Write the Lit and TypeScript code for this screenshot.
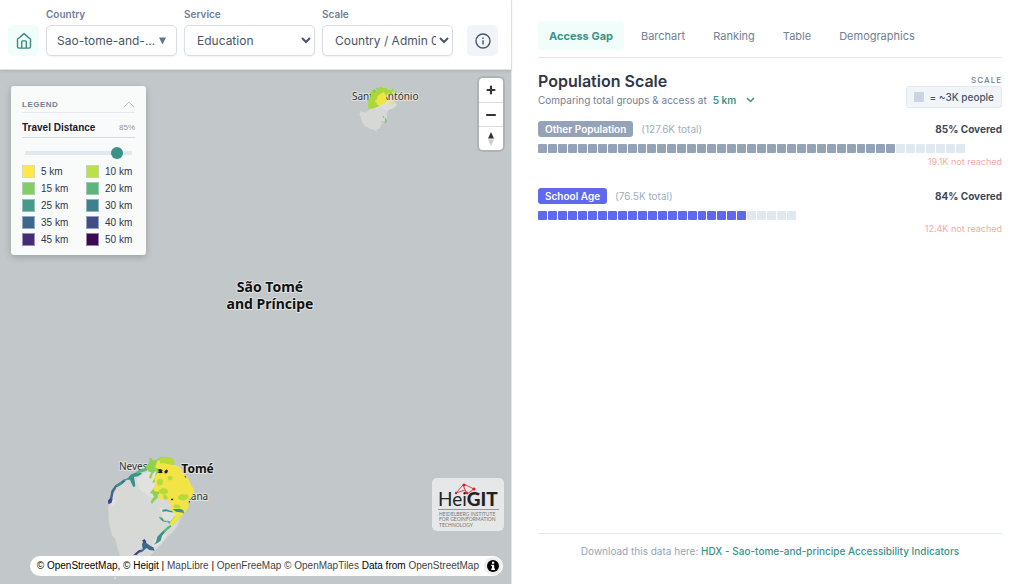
import { LitElement, html, css, svg } from "lit";
import { customElement, property, state } from "lit/decorators.js";
import { classMap } from "lit/directives/class-map.js";

interface Band {
  label: string;
  color: string;
}

interface Group {
  name: string;
  total: string;
  covered: number;
  missed: string;
  units: number;
  filled: number;
  color: string;
}

const BANDS: Band[] = [
  { label: "5 km", color: "#fde74a" },
  { label: "10 km", color: "#bddf49" },
  { label: "15 km", color: "#84cd62" },
  { label: "20 km", color: "#5bb67c" },
  { label: "25 km", color: "#479a89" },
  { label: "30 km", color: "#3c818c" },
  { label: "35 km", color: "#3d688d" },
  { label: "40 km", color: "#414c89" },
  { label: "45 km", color: "#452c77" },
  { label: "50 km", color: "#3d0852" },
];

const GROUPS: Group[] = [
  { name: "Other Population", total: "127.6K", covered: 85, missed: "19.1K", units: 43, filled: 36, color: "#94a3b8" },
  { name: "School Age", total: "76.5K", covered: 84, missed: "12.4K", units: 26, filled: 21, color: "#6069ee" },
];

/* Number of unit squares that would fill a row from edge to edge. */
const ROW_UNITS = 46.7;

const TABS = ["Access Gap", "Barchart", "Ranking", "Table", "Demographics"];

@customElement("top-bar")
export class TopBar extends LitElement {
  static styles = css`
    :host {
      display: block;
      background: #fff;
      border-bottom: 1px solid #dde2e8;
      box-shadow: 0 1px 3px rgba(0, 0, 0, 0.12);
      position: relative;
      z-index: 1;
    }
    .bar {
      display: flex;
      align-items: flex-end;
      gap: 7px;
      padding: 8px 13px 13px 8px;
    }
    .field {
      flex: 1 1 0;
      min-width: 0;
      display: flex;
      flex-direction: column;
      gap: 4px;
    }
    .label {
      font-size: 10px;
      line-height: 13px;
      font-weight: 600;
      color: #718096;
    }
    .control {
      box-sizing: border-box;
      width: 100%;
      height: 31px;
      border: 1px solid #d5dde8;
      border-radius: 5px;
      background: #fff;
      color: #4a5568;
      font: 400 12px/16px Inter, sans-serif;
      box-shadow: 0 1px 2px rgba(0, 0, 0, 0.05);
    }
    .picker {
      display: flex;
      align-items: center;
      justify-content: space-between;
      padding: 0 10px;
      white-space: nowrap;
    }
    .caret {
      color: #64748b;
    }
    .select {
      padding: 0 0 0 8px;
    }
    .icon {
      flex: none;
      display: flex;
      align-items: center;
      justify-content: center;
      width: 31px;
      height: 31px;
      padding: 0;
      border: 0;
      border-radius: 5px;
      background: #f1f5f9;
      color: #4a5568;
    }
    .home {
      background: #f0fdfa;
      color: #3b8a7e;
    }
    .info {
      margin-left: 7px;
    }
  `;

  render() {
    return html`
      <header class="bar">
        <button class="icon home" aria-label="Home">
          <svg width="16" height="18" viewBox="0 0 16 18" fill="none" stroke="currentColor" stroke-width="1.4" stroke-linejoin="round">
            <path d="M1.5 7.2 8 1.6l6.500 5.600v7.300a1.600 1.600 0 0 1-1.600 1.600H3.100a1.600 1.600 0 0 1-1.600-1.600z" />
            <path d="M5.700 16V9.700a.8.8 0 0 1 .8-.8h3a.8.8 0 0 1 .8.8V16" />
          </svg>
        </button>
        <div class="field">
          <label class="label" for="country">Country</label>
          <button class="control picker" id="country">
            <span>Sao-tome-and-...</span>
            <svg class="caret" width="7" height="8" viewBox="0 0 7 8"><path fill="currentColor" d="M0 .5h7L3.500 7.500z" /></svg>
          </button>
        </div>
        <div class="field">
          <label class="label" for="service">Service</label>
          <select class="control select" id="service">
            <option>Education</option>
          </select>
        </div>
        <div class="field">
          <label class="label" for="scale">Scale</label>
          <select class="control select" id="scale">
            <option>Country / Admin 0</option>
          </select>
        </div>
        <button class="icon info" aria-label="Information">
          <svg width="16" height="16" viewBox="0 0 16 16" fill="none" stroke="currentColor" stroke-width="1.4">
            <circle cx="8" cy="8" r="7" />
            <path d="M8 7.200v4.200M8 4.600v1.400" />
          </svg>
        </button>
      </header>
    `;
  }
}

@customElement("map-legend")
export class MapLegend extends LitElement {
  static styles = css`
    :host {
      display: block;
      box-sizing: border-box;
      width: 135px;
      padding: 10px 11px 9px;
      border-radius: 3px;
      background: #f9fbfb;
      box-shadow: 0 2px 7px rgba(0, 0, 0, 0.2);
      font-family: "Liberation Sans", sans-serif;
      color: #2d3748;
    }
    .head {
      display: flex;
      align-items: center;
      justify-content: space-between;
      height: 16px;
      border-bottom: 1px solid #e5e9ef;
      font-size: 8px;
      font-weight: 700;
      letter-spacing: 0.5px;
      color: #718096;
    }
    .toggle {
      display: flex;
      padding: 0;
      border: 0;
      background: none;
      color: #b8c0ca;
    }
    .title {
      display: flex;
      align-items: center;
      justify-content: space-between;
      height: 20px;
      padding-top: 4px;
      border-bottom: 1px solid #d5dbe3;
      font-size: 10px;
      font-weight: 700;
      color: #1a202c;
    }
    .value {
      font-size: 8px;
      font-weight: 400;
      color: #8a94a3;
    }
    .slider {
      appearance: none;
      display: block;
      box-sizing: border-box;
      width: calc(100% - 6px);
      height: 12px;
      margin: 9px 3px 6px;
      background: linear-gradient(#e2e8f0, #e2e8f0) center / 100% 4px no-repeat;
    }
    .slider::-webkit-slider-thumb {
      appearance: none;
      width: 12px;
      height: 12px;
      border-radius: 50%;
      background: #3b9287;
    }
    .bands {
      display: grid;
      grid-template-columns: 1fr 49px;
      row-gap: 4px;
      margin: 0;
      padding: 0;
      list-style: none;
    }
    .band {
      display: grid;
      grid-template-columns: 13px 1fr;
      column-gap: 6px;
      align-items: center;
      font-size: 10px;
      line-height: 13px;
      white-space: nowrap;
    }
    .swatch {
      box-sizing: border-box;
      width: 13px;
      height: 13px;
      border: 1px solid rgba(203, 213, 225, 0.6);
    }
  `;

  render() {
    return html`
      <div class="head">
        <span>LEGEND</span>
        <button class="toggle" aria-label="Collapse legend">
          <svg width="12" height="8" viewBox="0 0 12 8" fill="none" stroke="currentColor">
            <path d="M1 7l5-5 5 5" />
          </svg>
        </button>
      </div>
      <div class="title"><label for="opacity">Travel Distance</label><span class="value">85%</span></div>
      <input class="slider" id="opacity" type="range" min="0" max="94" value="85" />
      <ul class="bands">
        ${BANDS.map(
          (b) => html`<li class="band">
            <span class="swatch" style="background:${b.color}"></span><span>${b.label}</span>
          </li>`
        )}
      </ul>
    `;
  }
}

@customElement("map-view")
export class MapView extends LitElement {
  static styles = css`
    :host {
      display: block;
      position: relative;
      overflow: hidden;
      background: #c2c7c9;
    }
    .canvas {
      position: absolute;
      inset: 0;
      width: 100%;
      height: 100%;
    }
    .place {
      font-family: "Noto Sans", sans-serif;
      font-size: 10px;
      fill: #333;
      stroke: #dfe2e2;
      stroke-width: 2px;
      stroke-linejoin: round;
      paint-order: stroke;
    }
    .capital {
      font-size: 12px;
      font-weight: 700;
      fill: #111;
    }
    .nation {
      font-size: 14px;
      font-weight: 700;
      fill: #111;
      text-anchor: middle;
    }
    .legend {
      position: absolute;
      left: 11px;
      top: 16px;
    }
    .zoom {
      position: absolute;
      right: 8px;
      top: 8px;
      width: 24px;
      border-radius: 4px;
      background: #fff;
      box-shadow: 0 0 0 2px rgba(0, 0, 0, 0.1);
      overflow: hidden;
    }
    .step {
      display: flex;
      align-items: center;
      justify-content: center;
      width: 100%;
      height: 24px;
      padding: 0;
      border: 0;
      background: none;
    }
    .step + .step {
      border-top: 1px solid #ddd;
    }
    .brand {
      position: absolute;
      right: 7px;
      bottom: 53px;
      width: 72px;
      height: 53px;
      border-radius: 5px;
      background: #e5e7e8;
    }
    .credit {
      position: absolute;
      right: 8px;
      bottom: 8px;
      display: flex;
      align-items: center;
      gap: 5px;
      height: 20px;
      padding: 0 1px 0 7px;
      border-radius: 10px;
      background: #fff;
      font: 10px/20px "Liberation Sans", sans-serif;
      color: #000;
      white-space: nowrap;
    }
    .link {
      color: #444;
      text-decoration: none;
    }
    .about {
      display: flex;
      align-items: center;
      justify-content: center;
      width: 18px;
      height: 18px;
      padding: 0;
      border: 0;
      border-radius: 50%;
      background: #eee;
    }
  `;

  private principe() {
    return svg`<g transform="translate(340 0) scale(.33333)">
      <path fill="#d5d8d4" d="M62 124l16 4 8-8 12-10 8-22 18-22 14 6 14-4 14 8-4 16 10 12-10 10-16 2-4 12-2 18-14 14-8 16-8 2 2 8-8-6-10-2-20-10-8-12-4-16-4-6z" />
      <path fill="#dcdedb" d="M104 60l14-8 20 6 24 4 8 16-6 12-12 10 18 4-14 12-16 6-14-10-20 6z" />
      <text class="place" transform="scale(3)" x="12" y="30">Santo António</text>
      <path fill="#a9d83b" d="M98 60l8 0 4 4 6-12 8-2 4 4 12 0 4 6 10 0 4-6 4 4-2 10-8 6-6-4-6 4-14 4-4 24-8 8-10 4-8 2-10 0-2-10 2-6-4-8 8-8 2-10-4-6z" />
      <path fill="#f2e447" d="M124 70l8-4 4 8 4 2 0 6-2 6 4 4-4 6-6 2-6 4-14 2-2-8-6-4 8-8 0-8zM150 97l10-2 2 8-8 2zM156 66l8 2 0 6-8-2z" />
      <path fill="#79ca67" d="M98 60l8-2 2 8-8 2zM110 52l5 4-6 8zM150 70l6-2 2 4-6 2zM164 64l6-1 0 4-5 1zM128 138l3 0 2 5-4 0zM134 142l4 4 3 6-3 6-4 3 2-8zM124 153l3 0 1 3-3 0z" />
    </g>`;
  }

  private saoTome() {
    return svg`<g transform="translate(104 382) scale(.33333)">
      <path fill="#d7d9d6" d="M180 15l-20 8-18 14-14 8-20 14-22 16-14 8-20 12-16 18-10 20-10 18-4 16 2 20 0 22 4 16 6 24 10 12 4 18 4 16 4 8 2 20 2 28 6 4 8-2 10-4 6-10 20-4 26-12 14-12 14-16 22-22 16-20 14-12 14-18 10-22 8-14-2-16 10-22-12-24-14-32-20-24-8-14-18-12z" />
      <path fill="#e1e2df" d="M96 80l50-30 30-20 20 20-30 60-18 30-40-26-8-20zM165 165l30 12 32-20 8 30-26 34-30-20zM24 140l12 0-4 20-10 6zM150 262l22-14 20-6-24 34-28 14z" />
      <g transform="scale(3)">
        <text class="place" x="15" y="18">Neves</text>
        <text class="place capital" x="53" y="21">São Tomé</text>
        <text class="place" x="66" y="48">Santana</text>
      </g>
      <path fill="#3d688d" d="M12 148l6-10 4-22 12-16 16-10 10-8 4 6-12 10-14 6-10 18-2 14-4 16-8 4zM90 308l14-12 12-4-2-16 8-14 6 12 12 8 8 4 4 10-16-2-8-6-14 12-10 2-6 6z" />
      <path fill="#43438a" d="M12 146l7-8 7 4-4 10-8 4zM88 309l16-14 8-2-6 8-8 8zM114 266l7-5 6 8-6 4z" />
      <path fill="#3c918b" d="M58 84l14-6 8-10 14-6 12-2 8 5-12 8-12 2 2 12 2 16-6 2-6-12-4-10-10 0-8 7zM35 101l15-12 6 5-14 10zM146 282l10-12 4-16 10-10 10-10 6 3-12 15-4 14-8 6-8 4-6 3zM175 173l12-1 12 4 12-2 24 0 6 10-8 2-12-5-20 0-14-3-12 1zM165 194l10 4 5 8 10 1-4 3-10-2-8-8z" />
      <path fill="#5bb67c" d="M96 60l14-9 14-3 6-8 5 5-8 12-14 4-12 5zM178 236l12-12 10-6 2 6-12 10-8 8zM208 170l32 5 0 11-18-2-12-8zM166 194l6 4 3 6-6-2zM190 205l10 4 4 8-6 0-8-6z" />
      <path fill="#8fd14f" d="M124 44l12-12 0-14 8 0 2 8 14-4 12-8 24 2 12 10 0 18-10 12-24 6-16 14-6 20 8 14 10 14-8 12-10 10-8 10-4-5 4-10 6-6-4-10-8-2 6-8 8-8 2-18-10 4 8-16 6-22-12 10-4 14-8 0 8-18-8-2z" />
      <path fill="#b6da3d" d="M168 18l12-4 20 2 12 10-4 14-10 10-22 6-8-10-8-4-10 4 4-10 8-4zM200 168l18 8 22-6 2-12-12-8-18 4-8 8zM200 206l12-14 18-8 4 8-16 16-12 12-8-2z" />
      <path fill="#f2e447" d="M160 24l20 6 20 8 22 4 10 6 4 16 14 10 4 8 8 18 8 14-6 20-12 14 2 16-8 14-12 10-10 12-14 14-8 8-6-6 14-18 8-8-20-18 4-14-18-18-14 2-10-10 8-12-16-2-4-8 8-14-6-18 10-14 14-8-10-6-10-2z" />
      <path fill="#b6da3d" d="M160 84l10-5 8 8-4 12-10 2-6-8zM164 114l14-6 12 4 2 10-10 6-14-4zM190 75l8-4 9 5-4 9-9 0zM178 128l10 2 4 10-8 4-6-6zM222 133l12-7 18 2 2 10-16 8-14-4zM208 160l12-3 10 5-4 8-16-3zM166 22l14-7 20 2 10 8-2 10-14 2-16-4-8 2z" />
      <path fill="#3c918b" d="M206 171l24 0 8 4 2 8-12-2-12-2z" />
      <path fill="#222" d="M160 54l8-3 8 3-2 4 2 4-8 2-8-3 7-3zM181 58l7-6 4 4-3 8-7 0zM241 73l5 0-1 5zM201 140l7 0-1 5-6-1zM254 147l4 0-2 6z" />
      <path fill="#d9dbd8" d="M52 314l5-6 3 4-4 6zM30 374h6v8h-6z" />
    </g>`;
  }

  render() {
    return html`
      <svg class="canvas" viewBox="0 0 511 514" preserveAspectRatio="xMidYMid slice" role="img" aria-label="Map of São Tomé and Príncipe">
        ${this.principe()} ${this.saoTome()}
        <text class="place nation" x="270" y="222">São Tomé</text>
        <text class="place nation" x="270" y="239">and Príncipe</text>
      </svg>
      <map-legend class="legend"></map-legend>
      <div class="zoom">
        <button class="step" aria-label="Zoom in">
          <svg width="10" height="10" viewBox="0 0 10 10" stroke="#333" stroke-width="2.200" stroke-linecap="round"><path d="M1.500 5h7M5 1.500v7" /></svg>
        </button>
        <button class="step" aria-label="Zoom out">
          <svg width="12" height="10" viewBox="0 0 12 10" stroke="#333" stroke-width="2.200" stroke-linecap="round"><path d="M2 5h8" /></svg>
        </button>
        <button class="step" aria-label="Reset north">
          <svg width="8" height="16" viewBox="0 0 8 16"><path fill="#333" d="M4 1l3 6.500H1z" /><path fill="#ccc" d="M4 15L1 8.500h6z" /></svg>
        </button>
      </div>
      <svg class="brand" viewBox="0 0 72 53" role="img" aria-label="HeiGIT">
        <g fill="none" stroke="#d8474b" stroke-width="1">
          <path d="M24 15l7-8 3 0 8 4M24 15l9-3 2 4M31 7l4 9 7-5" />
        </g>
        <g fill="#d0252b"><circle cx="32" cy="7" r="1.600" /><circle cx="24" cy="15" r="1.200" /><circle cx="42" cy="11" r="1.600" /><circle cx="35" cy="15" r="1.300" /></g>
        <text x="6" y="28" font-family="Lato, sans-serif" font-size="19" fill="#222">Hei<tspan font-weight="900">GIT</tspan></text>
        <path d="M6 31.500h61" stroke="#999" stroke-width="1" />
        <g font-family="Lato, sans-serif" font-size="5" fill="#777">
          <text x="7" y="38">HEIDELBERG INSTITUTE</text>
          <text x="7" y="43">FOR GEOINFORMATION</text>
          <text x="7" y="49">TECHNOLOGY</text>
        </g>
      </svg>
      <div class="credit">
        <span
          >© OpenStreetMap, © Heigit | <a class="link" href="#maplibre">MapLibre</a> |
          <a class="link" href="#openfreemap">OpenFreeMap</a> <a class="link" href="#tiles">© OpenMapTiles</a> Data from
          <a class="link" href="#osm">OpenStreetMap</a></span
        >
        <button class="about" aria-label="Attribution">
          <svg width="12" height="12" viewBox="0 0 12 12"><circle cx="6" cy="6" r="6" /><path fill="#fff" d="M5 1.800h2.200v2H5zM4.200 4.800h3v3.800h.8v1.300H4.200V8.600H5V6.100h-.8z" /></svg>
        </button>
      </div>
    `;
  }
}

@customElement("population-group")
export class PopulationGroup extends LitElement {
  @property({ attribute: false }) group!: Group;

  static styles = css`
    :host {
      display: block;
    }
    .head {
      display: flex;
      align-items: center;
      gap: 8px;
      height: 16px;
      font-size: 10px;
    }
    .name {
      padding: 0 7px;
      border-radius: 3px;
      color: #fff;
      font-weight: 600;
      line-height: 16px;
    }
    .total {
      color: #a0aec0;
    }
    .covered {
      margin-left: auto;
      color: #3c475a;
      font-weight: 700;
    }
    .units {
      display: flex;
      gap: 1px;
      margin-top: 7px;
    }
    .unit {
      flex: 1 1 0;
      height: 9px;
      border-radius: 1px;
      background: #e2e8f0;
    }
    .missed {
      margin: 3px 0 0;
      text-align: right;
      font-size: 9px;
      line-height: 12px;
      color: #f5aaa5;
    }
  `;

  render() {
    const g = this.group;
    return html`
      <div class="head">
        <span class="name" style="background:${g.color}">${g.name}</span>
        <span class="total">(${g.total} total)</span>
        <span class="covered">${g.covered}% Covered</span>
      </div>
      <div class="units" style="width:${(g.units / ROW_UNITS) * 100}%">
        ${Array.from(
          { length: g.units },
          (_, i) => html`<span class="unit" style=${i < g.filled ? `background:${g.color}` : ""}></span>`
        )}
      </div>
      <p class="missed">${g.missed} not reached</p>
    `;
  }
}

@customElement("stats-panel")
export class StatsPanel extends LitElement {
  @state() private active = "Access Gap";

  static styles = css`
    :host {
      display: flex;
      flex-direction: column;
      box-sizing: border-box;
      padding: 21px 22px 26px 26px;
      background: #fff;
    }
    .tabs {
      display: flex;
      gap: 6px;
      padding-bottom: 7px;
      border-bottom: 1px solid #e2e8f0;
    }
    .tab {
      height: 29px;
      padding: 0 11px;
      border: 0;
      border-radius: 3px;
      background: none;
      color: #718096;
      font: 400 11px/16px Inter, sans-serif;
    }
    .active {
      background: #f0fdfa;
      color: #3b9287;
      font-weight: 700;
    }
    .intro {
      display: flex;
      justify-content: space-between;
      padding-top: 13px;
    }
    .title {
      margin: 0;
      font-size: 16px;
      line-height: 20px;
      font-weight: 600;
      color: #2d3748;
    }
    .compare {
      display: flex;
      align-items: center;
      margin-top: 2px;
      font-size: 10px;
      line-height: 14px;
      color: #718096;
    }
    .distance {
      appearance: none;
      margin-left: 6px;
      padding: 0 18px 0 0;
      border: 0;
      background: none;
      color: #3b9287;
      font: 600 10px/14px Inter, sans-serif;
    }
    .chevron {
      margin-left: -9px;
      pointer-events: none;
    }
    .key {
      display: flex;
      flex-direction: column;
      align-items: flex-end;
      gap: 1px;
      padding-top: 4px;
    }
    .caption {
      font-size: 8px;
      line-height: 10px;
      font-weight: 500;
      letter-spacing: 1px;
      color: #718096;
    }
    .unit {
      display: flex;
      align-items: center;
      gap: 6px;
      box-sizing: border-box;
      height: 22px;
      padding: 0 7px;
      border: 1px solid #e2e8f0;
      border-radius: 3px;
      background: #f1f5f9;
      font-size: 10px;
      font-weight: 500;
      color: #4a5568;
    }
    .dot {
      width: 10px;
      height: 10px;
      border-radius: 1px;
      background: #cbd5e1;
    }
    .groups {
      display: flex;
      flex-direction: column;
      gap: 20px;
      padding-top: 13px;
    }
    .foot {
      margin-top: auto;
      padding-top: 10px;
      border-top: 1px solid #e2e8f0;
      text-align: center;
      font-size: 10px;
      line-height: 14px;
      color: #94a3b8;
    }
    .source {
      color: #3b9287;
      font-weight: 500;
      text-decoration: none;
    }
  `;

  render() {
    return html`
      <nav class="tabs">
        ${TABS.map(
          (t) => html`<button class=${classMap({ tab: true, active: t === this.active })} @click=${() => (this.active = t)}>${t}</button>`
        )}
      </nav>
      <div class="intro">
        <div>
          <h2 class="title">Population Scale</h2>
          <div class="compare">
            <label for="distance">Comparing total groups &amp; access at</label>
            <select class="distance" id="distance">
              <option>5 km</option>
            </select>
            <svg class="chevron" width="9" height="6" viewBox="0 0 9 6" fill="none" stroke="#3b9287" stroke-width="1.500"><path d="M1 1l3.500 3.500L8 1" /></svg>
          </div>
        </div>
        <div class="key">
          <span class="caption">SCALE</span>
          <span class="unit"><span class="dot"></span>= ~3K people</span>
        </div>
      </div>
      <section class="groups">${GROUPS.map((g) => html`<population-group .group=${g}></population-group>`)}</section>
      <footer class="foot">
        Download this data here: <a class="source" href="#hdx">HDX - Sao-tome-and-principe Accessibility Indicators</a>
      </footer>
    `;
  }
}

@customElement("app-root")
export class AppRoot extends LitElement {
  static styles = css`
    :host {
      display: grid;
      grid-template-columns: minmax(0, 1fr) minmax(0, 1fr);
      grid-template-rows: minmax(0, 1fr);
      height: 100vh;
      font-family: Inter, sans-serif;
      background: #fff;
    }
    .left {
      display: flex;
      flex-direction: column;
      border-right: 1px solid #e2e8f0;
    }
    .map {
      flex: 1;
    }
  `;

  render() {
    return html`
      <main class="left">
        <top-bar></top-bar>
        <map-view class="map"></map-view>
      </main>
      <stats-panel></stats-panel>
    `;
  }
}
